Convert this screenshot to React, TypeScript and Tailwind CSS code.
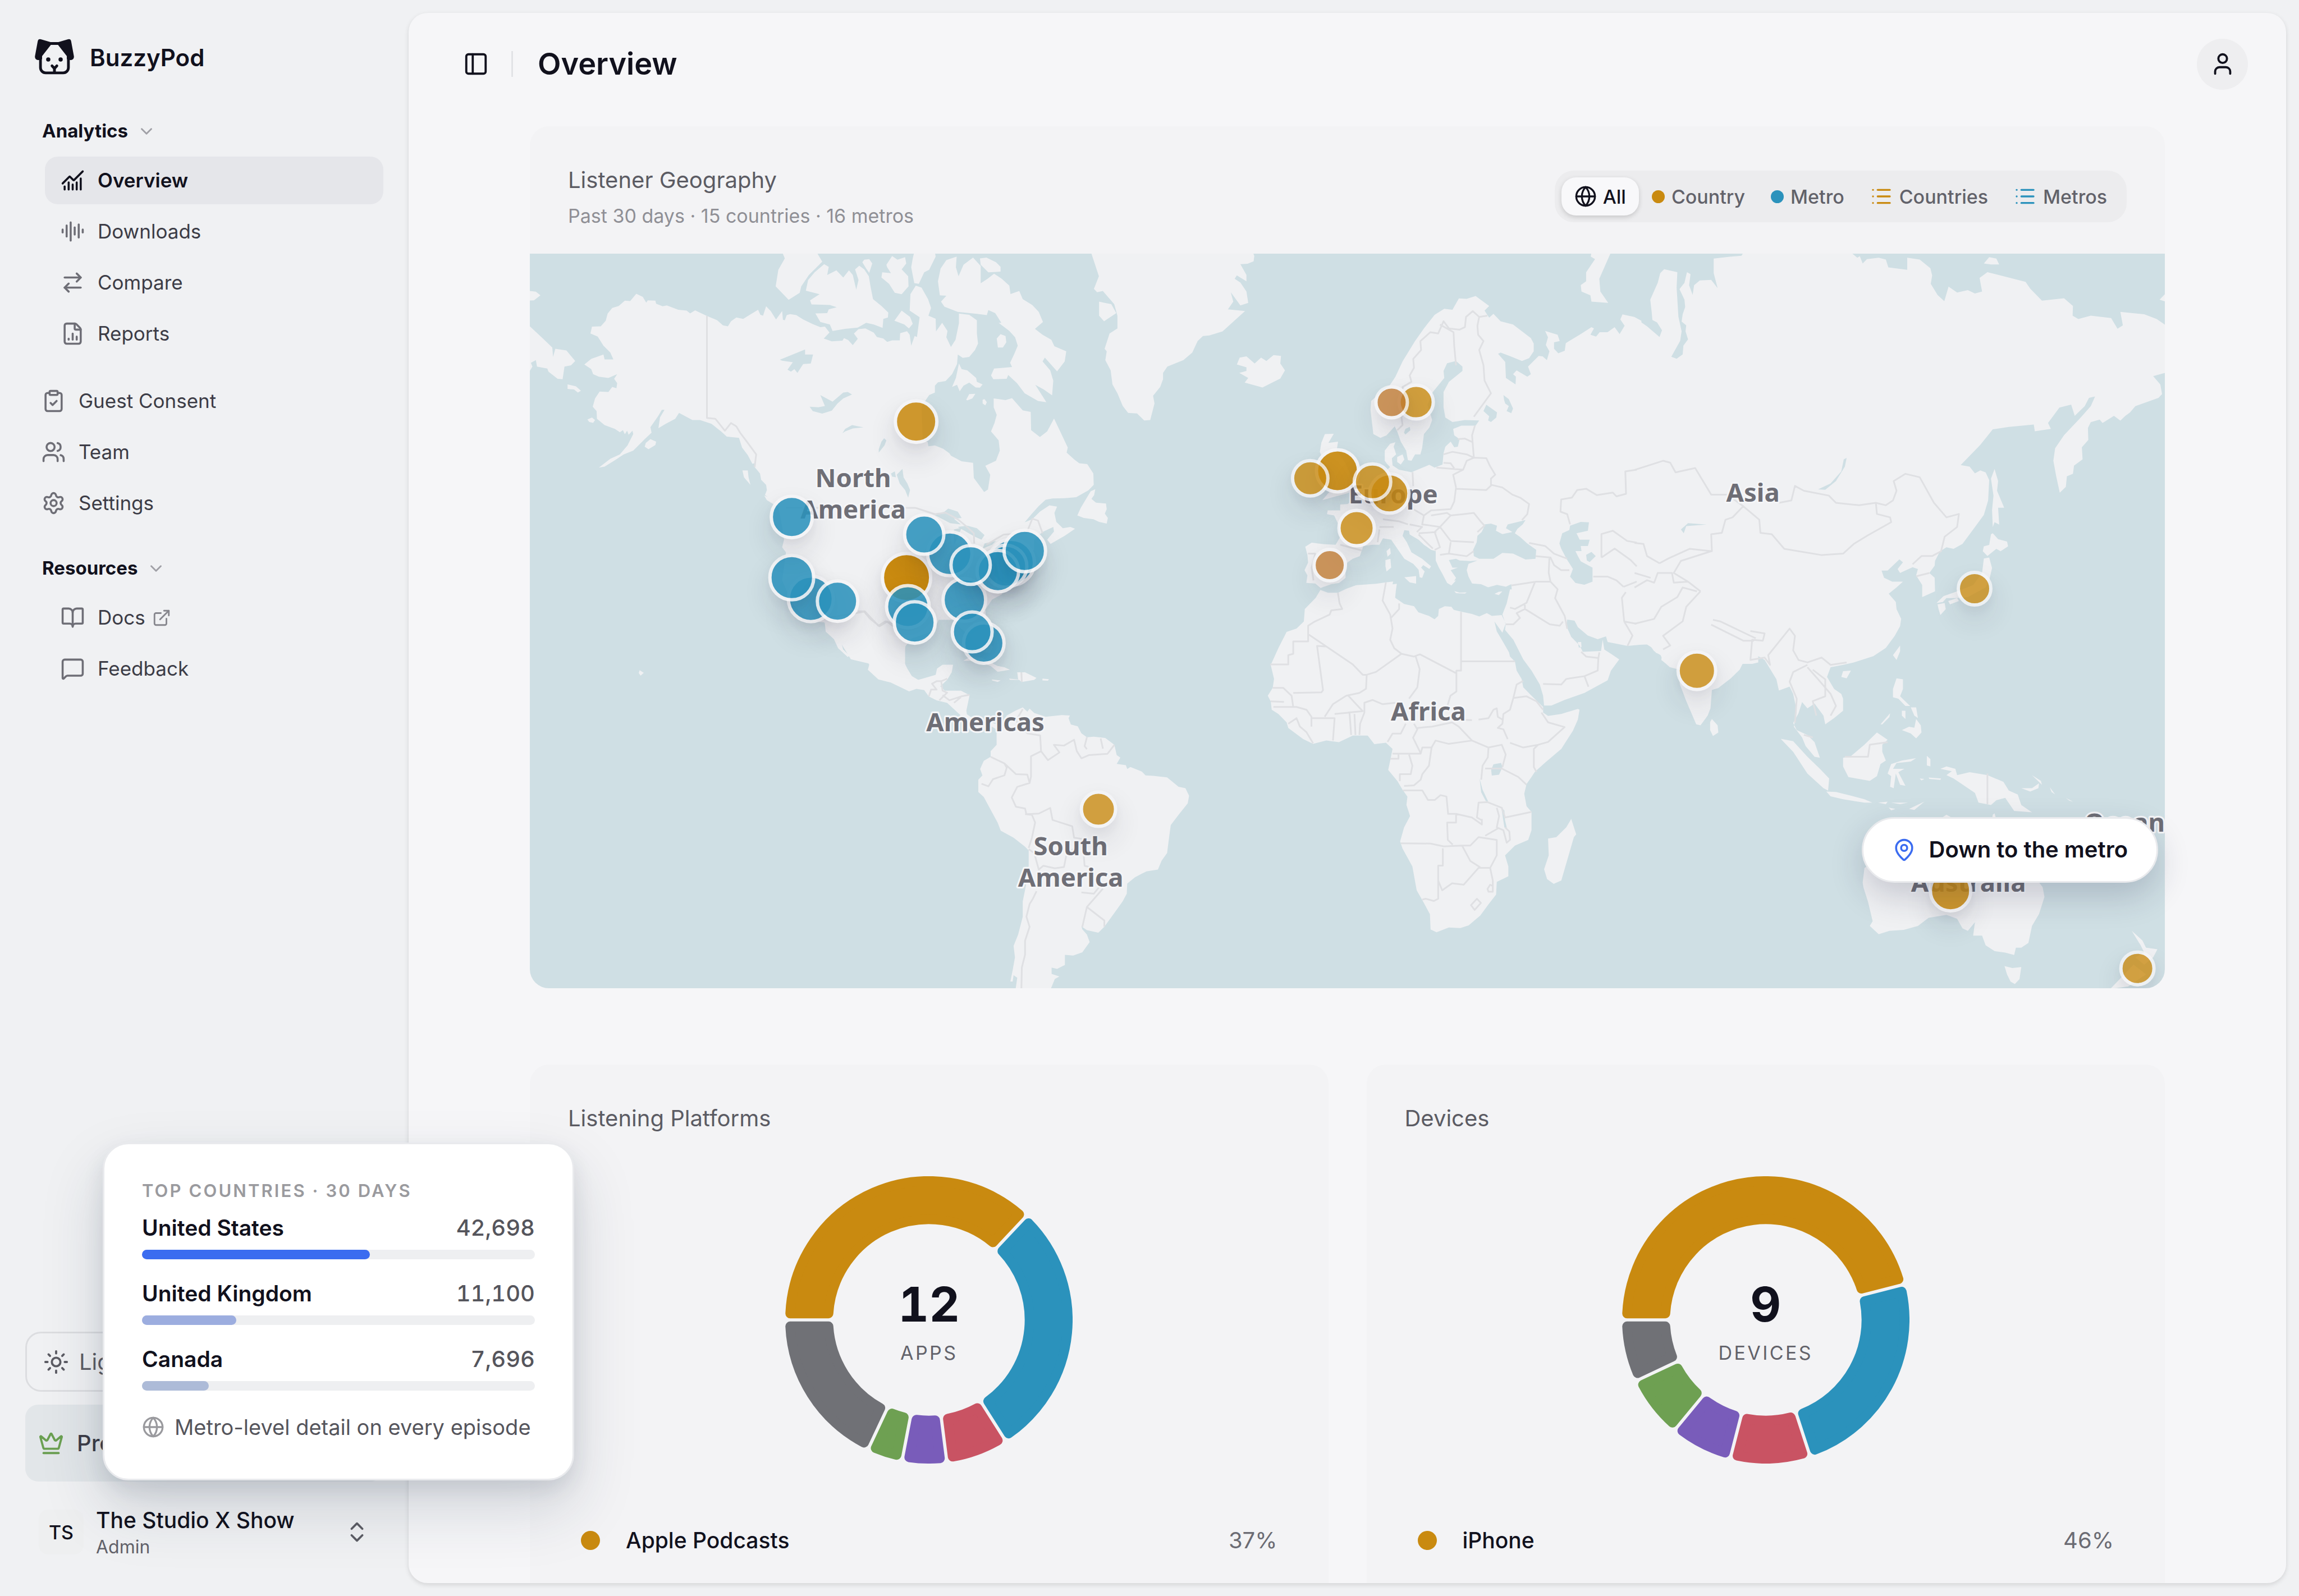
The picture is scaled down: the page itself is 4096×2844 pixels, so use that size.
import type { ReactNode } from "react";
import {
  ArrowRightLeft,
  AudioLines,
  BookOpen,
  ChartNoAxesCombined,
  ChevronDown,
  ChevronsUpDown,
  ClipboardCheck,
  Crown,
  ExternalLink,
  FileChartColumn,
  Globe,
  List,
  MapPin,
  MessageSquare,
  PanelLeft,
  Settings,
  Sun,
  User,
  Users,
  type LucideIcon,
} from "lucide-react";

/* ------------------------------------------------------------------ */
/* Sidebar                                                             */
/* ------------------------------------------------------------------ */

function Logo() {
  return (
    <svg viewBox="0 -1 98 90" className="h-16 w-[70px] shrink-0" aria-hidden="true">
      <path
        d="M14 44V71A13 13 0 0 0 27 84.5H71A13 13 0 0 0 84 71V44M34 11H64"
        fill="none"
        stroke="#11111d"
        strokeWidth="6.8"
      />
      <path
        d="M7 6Q8 -1.5 15 .3L39 7.6 40 14.5 18 42.5V50Q14 53 7 52.3 -.5 51 .2 43Z"
        fill="#11111d"
      />
      <path
        d="M91 6Q90 -1.5 83 .3L59 7.6 58 14.5 80 42.5V50Q84 53 91 52.3 98.5 51 97.8 43Z"
        fill="#11111d"
      />
      <circle cx="33.5" cy="51" r="5.3" fill="#11111d" />
      <circle cx="64.5" cy="51" r="5.3" fill="#11111d" />
      <path
        d="M43 67 49 73.500 55 67M49 73.500V84"
        fill="none"
        stroke="#11111d"
        strokeWidth="7"
        strokeLinecap="round"
        strokeLinejoin="round"
      />
    </svg>
  );
}

function NavHeading({ children }: { children: ReactNode }) {
  return (
    <button
      type="button"
      className="flex h-11 items-center gap-4 pl-[75px] text-left text-[33px] font-bold text-[#11111d]"
    >
      {children}
      <ChevronDown className="size-[34px] text-[#a0a0a6]" />
    </button>
  );
}

function NavItem({
  icon: Icon,
  label,
  active = false,
  nested = false,
  external = false,
}: {
  icon: LucideIcon;
  label: string;
  active?: boolean;
  nested?: boolean;
  external?: boolean;
}) {
  return (
    <li className={nested ? "pl-20" : "pl-[46px]"}>
      <a
        href="#"
        className={
          active
            ? "flex h-[85px] items-center gap-[23px] rounded-[23px] bg-[#e5e6ea] px-7 text-[35px] font-semibold text-[#11111d]"
            : "flex h-[85px] items-center gap-[23px] rounded-[23px] px-7 text-[35px] text-[#3c3c46]"
        }
      >
        <Icon className={active ? "size-[43px]" : "size-[43px] text-[#6e6e76]"} />
        <span className="flex items-center gap-3">
          {label}
          {external && <ExternalLink className="size-[34px] text-[#86868d]" />}
        </span>
      </a>
    </li>
  );
}

function Sidebar() {
  return (
    <aside className="flex w-[728px] shrink-0 flex-col pr-[45px]">
      <div className="flex h-[212px] items-start gap-7 pl-[62px] pt-[69px]">
        <Logo />
        <span className="text-[42px] leading-[68px] font-semibold text-[#11111d]">BuzzyPod</span>
      </div>
      <nav aria-label="Main">
        <NavHeading>Analytics</NavHeading>
        <ul className="mt-[23px] flex flex-col gap-1.5">
          <NavItem nested active icon={ChartNoAxesCombined} label="Overview" />
          <NavItem nested icon={AudioLines} label="Downloads" />
          <NavItem nested icon={ArrowRightLeft} label="Compare" />
          <NavItem nested icon={FileChartColumn} label="Reports" />
        </ul>
        <ul className="mt-[35px] flex flex-col gap-1.5">
          <NavItem icon={ClipboardCheck} label="Guest Consent" />
          <NavItem icon={Users} label="Team" />
          <NavItem icon={Settings} label="Settings" />
        </ul>
        <div className="mt-[52px]">
          <NavHeading>Resources</NavHeading>
        </div>
        <ul className="mt-[23px] flex flex-col gap-1.5">
          <NavItem nested external icon={BookOpen} label="Docs" />
          <NavItem nested icon={MessageSquare} label="Feedback" />
        </ul>
      </nav>
      <div className="mt-auto flex flex-col gap-[23px] pb-[62px] pl-[45px]">
        <button
          type="button"
          className="flex h-[107px] items-center gap-[18px] rounded-[28px] border-3 border-[#dcdde0] px-[29px] text-[40px] text-[#5c5c64]"
        >
          <Sun className="size-[46px]" />
          Light
        </button>
        <button
          type="button"
          className="flex h-[137px] items-center gap-[23px] rounded-[23px] bg-[#e2e6e9] px-[23px] text-[40px] font-medium text-[#3c3c46]"
        >
          <Crown className="size-[46px] text-[#6ba052]" />
          Pro
        </button>
        <button type="button" className="mt-[7px] flex h-28 items-center px-6 pt-2 text-left">
          <span className="flex size-20 shrink-0 items-center justify-center rounded-[17px] bg-[#eeeff0] text-[34px] font-medium text-[#11111d]">
            TS
          </span>
          <span className="flex flex-1 flex-col pl-[22px]">
            <span className="text-[39px] leading-[54px] font-medium text-[#11111d]">
              The Studio X Show
            </span>
            <span className="text-[32px] leading-[42px] text-[#62626a]">Admin</span>
          </span>
          <ChevronsUpDown className="size-[46px] text-[#5c5c64]" />
        </button>
      </div>
    </aside>
  );
}

/* ------------------------------------------------------------------ */
/* Map                                                                 */
/* ------------------------------------------------------------------ */

type Tile = { transform: string; land: string; water?: string; borders: string };

const TILES: Tile[] = [
  {
    // North America
    transform: "translate(1300 600) scale(.9566 .6378)",
    land:
      "M188 370 192 343 215 342 228 320 233 292 245 270 262 262 278 241 292 243 308 214 325 226 334 249 338 240 358 241 360 253 377 263 388 260 418 277 440 280 449 291 462 279 493 301 520 318 535 338 548 342 556 322 570 307 588 313 607 295 627 277 633 297 640 300 648 263 660 282 674 315 690 282 692 316 697 318 702 298 711 294 727 298 745 315 770 333 790 345 802 343 814 366 799 390 820 401 848 398 852 388 863 396 875 416 888 391 878 370 890 353 908 350 930 367 938 384 955 390 965 403 978 397 998 397 999 369 1017 361 1024 375 1028 418 1037 380 1043 384 1050 306 1024 280 1026 215 1040 182 1055 190 1072 235 1080 270 1073 300 1092 312 1093 362 1109 328 1123 360 1120 385 1132 423 1144 395 1153 330 1153 292 1180 297 1200 318 1200 370 1203 410 1195 435 1180 462 1163 466 1150 453 1148 490 1135 530 1118 557 1098 562 1090 575 1090 602 1075 612 1066 632 1055 660 1058 790 1071 796 1073 813 1090 810 1112 823 1128 841 1132 850 1160 872 1190 878 1192 938 1207 968 1219 993 1229 983 1235 925 1222 890 1250 870 1260 830 1257 790 1237 755 1246 722 1252 690 1244 660 1244 625 1275 632 1292 624 1320 672 1341 678 1342 750 1365 777 1384 755 1402 704 1415 745 1438 818 1435 838 1455 865 1468 880 1489 883 1505 920 1506 965 1492 986 1460 1013 1430 1017 1398 1018 1380 1023 1362 1048 1343 1080 1325 1112 1345 1100 1365 1070 1390 1045 1410 1050 1403 1075 1408 1110 1425 1135 1445 1130 1457 1137 1430 1165 1393 1197 1384 1180 1402 1148 1400 1130 1372 1150 1360 1165 1350 1180 1350 1220 1310 1270 1280 1330 1265 1395 1240 1415 1222 1455 1225 1500 1240 1560 1225 1575 1205 1530 1180 1500 1150 1495 1100 1495 1085 1540 1030 1568 1012 1600 1012 1700 870 1650 836 1568 800 1505 760 1500 716 1430 690 1340 700 1230 690 1210 695 1180 690 1130 680 1050 660 1020 645 1005 650 985 648 965 635 945 632 920 618 895 618 880 612 882 600 848 585 818 577 780 545 775 530 755 505 725 475 710 455 710 420 682 410 705 385 725 366 742 370 700 382 670 375 670 365 695 345 738 348 760 330 785 300 830 275 845 250 870 225 893 210 897 240 862 265 845 285 810 300 765 298 752 288 768 284 752 278 766 273 750 265 758 252 745 225 730 205 705 204 675 194 658 200 625 212 598 235 600 245 580 256 585 258 565 250 548 258 530 235 545 210 540 195 530 190 510 172 492 190 470 222 453 225 472 248 472 240 445 222 418 207 382Z" +
      "M643 1007 665 1018 690 1040 672 1045 650 1025ZM586 908 600 908 602 935 607 965 590 935ZM333 800 345 785 360 795 358 808 340 825 330 815ZM180 708 192 700 200 710 195 721 185 718ZM128 570 150 578 163 595 155 602 145 590 128 588Z" +
      "M20 330 28 340 60 385 88 425 90 462 96 430 125 437 148 478 137 495 120 500 115 550 102 548 78 520 75 508 48 500 45 475 32 485 36 500 28 520 20 520ZM20 203 28 203 45 206 57 220 40 240 20 241Z" +
      "M690 50 780 50 795 88 760 140 740 185 736 210 707 238 673 185 680 120 697 75Z" +
      "M800 98 812 108 808 140 832 122 850 150 865 122 875 140 884 198 890 160 881 118 892 104 905 118 917 145 922 190 928 235 950 262 968 288 967 307 955 313 953 348 930 335 910 328 888 347 855 352 822 360 815 335 790 325 777 291 808 290 812 275 833 267 815 258 795 257 767 256 763 240 788 216 752 202 758 160 775 130Z" +
      "M900 90 905 80 918 78 926 95 918 132 910 115ZM963 100 978 66 992 80 1012 70 1015 95 1003 118 1020 145 1021 185 1003 216 985 210 970 175 950 150 952 130 975 133 965 110ZM1036 50 1090 50 1092 68 1075 120 1062 130 1048 175 1036 172 1028 110 1032 75ZM1003 280 1025 305 1032 332 1022 350 1010 335 984 320Z" +
      "M1147 68 1145 110 1152 145 1165 100 1190 72 1210 105 1210 173 1228 155 1245 135 1265 155 1285 182 1288 215 1311 203 1320 235 1345 258 1362 285 1373 325 1352 352 1372 375 1395 395 1403 420 1434 440 1430 480 1410 519 1378 465 1372 480 1392 515 1400 555 1397 613 1375 590 1353 572 1382 640 1360 635 1325 605 1305 565 1282 533 1278 548 1243 550 1237 535 1245 508 1292 502 1287 485 1298 450 1307 418 1300 385 1285 360 1257 328 1264 328 1248 290 1230 278 1226 298 1200 293 1150 285 1115 265 1106 245 1120 222 1103 220 1098 165 1105 115 1120 82Z" +
      "M1208 75 1225 72 1250 90 1262 108 1262 127 1230 130 1210 100ZM1252 390 1262 373 1275 380 1277 405 1268 425 1255 425ZM1153 488 1160 510 1175 515 1198 545 1200 560 1215 570 1208 583 1197 582 1180 563 1165 575 1155 597 1148 572 1135 580 1145 545ZM1172 630 1180 608 1196 607 1188 625 1175 633ZM1215 630 1220 628 1226 640 1222 652 1215 645Z" +
      "M1510 982 1507 1005 1500 1020 1512 1035 1538 1038 1540 1060 1535 1078 1543 1095 1540 1117 1520 1110 1505 1100 1480 1095 1463 1085 1472 1055 1490 1010 1498 990ZM1520 245 1535 250 1552 255 1565 290 1550 305 1533 322 1520 300Z",
    water:
      "M684 473 750 433 750 453 771 453 765 488 745 490 730 525 722 510 713 520 704 512 718 483 690 477ZM762 658 785 660 802 655 790 612 822 638 850 602 862 600 873 610 850 625 835 645 820 673 795 685 770 675ZM848 762 855 745 873 730 903 739 875 743 855 755ZM957 782 963 790 958 810 943 838 943 825 950 795ZM1005 902 1008 935 1018 960 1025 985 1020 1015 1012 985 998 960 990 925ZM975 920 985 912 988 935 978 932Z" +
      "M1090 1085 1115 1070 1125 1058 1150 1070 1160 1095 1140 1098 1158 1120 1130 1115 1098 1090ZM1140 1140 1160 1133 1150 1170 1140 1200ZM1150 1130 1175 1125 1200 1135 1220 1162 1212 1180 1190 1165ZM1220 1195 1250 1185 1240 1200 1215 1215Z",
    borders:
      "M493 301V702L515 705 540 752 556 722 570 735 580 760 600 800 622 845 618 895M700 1055H1038L1045 1058 1090 1080 1118 1074 1150 1100 1178 1135 1192 1155 1193 1195M1225 1200 1270 1160 1330 1155 1345 1098 1360 1105 1372 1155M800 1490 905 1463 920 1490 945 1520 965 1502 985 1525",
  },
  {
    // Central and South America
    transform: "translate(1300 1500) scale(1.148 .6378)",
    land:
      "M690 -40 690 60 700 110 710 150 725 155 730 185 755 225 765 260 762 280 785 318 812 330 852 365 868 355 885 360 895 385 912 400 935 410 950 435 962 455 975 480 1000 500 1025 495 1043 515 1050 500 1030 485 1000 482 978 455 977 440 984 380 965 362 930 362 920 345 935 320 945 290 948 260 925 260 913 275 910 300 872 320 858 305 848 275 838 238 845 180 860 150 870 -40Z" +
      "M960 60 985 60 1010 130 1035 190 1028 215 1010 210 985 150 955 100ZM668 95 680 100 690 140 703 165 708 200 722 225 718 230 697 195 688 160 670 130ZM264 282 273 292 266 303 262 293Z" +
      "M970 245 985 230 1010 232 1045 265 1060 270 1072 280 1045 288 1030 265 1000 245ZM1033 318 1052 322 1045 328 1033 322ZM1070 315 1090 318 1088 290 1105 290 1130 312 1125 320 1098 328 1092 320 1072 320ZM1143 315 1157 317 1155 323 1143 322Z" +
      "M1043 520 1043 575 1030 600 1030 622 1015 638 1007 670 1012 695 1003 712 1003 760 1015 780 1030 830 1045 880 1052 912 1080 940 1105 975 1113 990 1113 1050 1110 1100 1100 1190 1100 1250 1090 1320 1080 1365 1083 1410 1078 1460 1073 1505 1078 1505 1080 1480 1088 1490 1084 1540 1080 1568 1160 1568 1162 1530 1170 1495 1180 1485 1163 1475 1163 1450 1175 1455 1192 1440 1192 1400 1210 1403 1230 1390 1246 1350 1240 1320 1230 1300 1228 1288 1240 1303 1265 1313 1278 1290 1300 1235 1318 1190 1327 1160 1328 1120 1345 1095 1370 1072 1395 1065 1403 1030 1415 1000 1420 930 1423 890 1440 850 1460 805 1463 775 1455 745 1440 740 1415 703 1385 697 1368 695 1360 680 1335 662 1328 670 1325 655 1305 650 1313 625 1305 615 1300 575 1280 548 1255 543 1240 545 1228 530 1220 502 1205 495 1200 470 1203 460 1185 458 1150 465 1125 450 1115 433 1110 445 1100 428 1085 440 1065 460 1055 490Z",
    borders:
      "M740 50 755 50 785 107 800 90 822 100M1113 985 1125 1000 1135 1065 1145 1050 1170 1060 1190 1055 1195 1010 1212 980M1130 1150 1122 1180 1115 1200 1108 1250 1115 1290 1105 1345 1105 1400 1098 1450 1097 1540M1030 622 1060 648 1065 665 1060 695 1035 710 1025 738 1010 728M1060 648 1085 690 1110 692 1115 725 1088 740 1076 782 1085 818 1105 825 1108 848 1120 850 1127 880 1120 940 1113 980M1100 435 1085 480 1110 530 1138 538 1140 600 1118 620 1118 700 1115 725M1140 600 1155 635 1180 605 1168 575 1190 578 1212 555 1218 600 1228 628 1245 615 1285 610 1300 575M1240 545 1235 580 1240 592M1270 550 1275 590M1105 848 1135 845 1160 823 1165 870 1208 895 1212 940 1230 945 1235 1050 1255 1060M1228 1155 1255 1160 1275 1115 1260 1120M1275 1140 1240 1212 1230 1290M1240 1212 1278 1265 1278 1290M895 385 900 358 912 358 902 335 912 325 922 325 935 315M922 325 925 362 935 370 918 400M925 380 940 400 965 385 984 378M950 410 965 388M1097 290 1098 328",
  },
  {
    // Greenland, Europe, western Russia
    transform: "translate(2800 600) scale(.8929 .6378)",
    land:
      "M-75 50 -73 56 -52 145 -66 195 -57 208 -41 203 -9 255 0 300 0 350 -22 370 -36 430 -30 440 -34 475 -19 515 -14 570 0 605 15 655 30 682 55 684 75 712 92 710 104 645 100 615 120 580 128 550 128 525 140 500 172 482 185 475 210 445 225 400 240 380 258 378 295 362 358 282 310 275 325 245 318 208 345 260 367 250 362 205 345 170 329 155 335 142 362 165 362 140 345 98 365 96 382 87 384 66 380 50Z" +
      "M335 492 343 465 362 460 385 488 403 465 418 478 438 455 459 458 457 488 470 515 457 547 407 582 357 563 367 545 342 525 362 517 362 503Z" +
      "M738 780 718 765 710 670 712 635 740 600 765 572 780 540 800 480 835 400 860 350 890 297 917 273 940 277 958 232 980 234 1005 223 1043 262 1030 280 1043 308 1055 293 1075 322 1110 335 1160 388 1168 410 1168 440 1155 467 1135 478 1100 458 1075 445 1068 450 1088 482 1090 545 1117 570 1118 540 1110 530 1120 515 1150 540 1160 530 1152 500 1182 458 1193 460 1205 475 1212 440 1202 415 1208 385 1200 360 1235 375 1241 400 1225 405 1225 430 1237 448 1255 438 1258 408 1300 372 1330 345 1337 350 1327 375 1343 382 1353 365 1375 365 1395 345 1409 372 1423 340 1411 315 1417 295 1450 305 1470 320 1470 1400 1108 1400 1105 1355 1090 1365 1065 1358 1040 1367 1020 1355 995 1352 985 1325 980 1300 985 1275 1010 1262 990 1264 960 1262 950 1255 930 1260 940 1290 955 1290 935 1300 950 1330 945 1342 950 1340 937 1360 925 1350 910 1310 902 1290 893 1262 893 1225 880 1220 860 1200 845 1180 820 1160 818 1145 805 1143 800 1165 812 1190 825 1230 855 1255 880 1285 875 1295 858 1280 852 1290 862 1305 855 1330 848 1328 845 1298 830 1275 805 1255 790 1225 768 1180 745 1175 735 1200 715 1200 690 1205 685 1225 680 1245 660 1255 645 1270 640 1300 640 1330 622 1350 600 1355 570 1370 555 1352 530 1350 533 1320 525 1300 535 1270 533 1240 527 1208 545 1192 580 1198 612 1200 625 1170 620 1120 608 1085 588 1080 590 1065 625 1065 625 1042 645 1040 670 1020 700 980 730 930 750 915 765 895 755 880 750 870 750 830 765 803 780 797 775 815 782 845 770 860 772 888 790 905 825 915 860 895 875 886 890 897 912 885 915 840 920 815 935 795 945 817 955 815 960 785 945 770 942 745 965 732 1005 732 1015 712 975 710 940 718 920 700 915 660 915 600 930 560 968 517 968 500 950 478 925 487 915 517 917 545 885 600 870 650 883 710 875 740 860 765 855 820 850 845 835 845 825 870 815 868 810 830 795 795 785 755 778 735 755 770Z" +
      "M582 765 607 764 592 800 619 795 615 830 640 880 655 930 675 960 670 985 640 1000 600 1015 575 1025 590 1000 600 985 590 960 600 920 580 880 568 835 572 800ZM785 855 800 845 805 865 795 885 785 875Z" +
      "M755 1225 765 1212 767 1235 758 1247ZM752 1260 766 1255 768 1290 755 1305 752 1285ZM805 1328 838 1323 838 1353 820 1348ZM945 1382 960 1388 980 1387 975 1392 950 1390ZM1058 1393 1070 1385 1080 1383 1070 1398Z" +
      "M1330 50 1385 50 1352 155 1355 205 1377 250 1330 245 1327 220 1302 205 1300 180 1315 165 1315 130 1340 78 1328 68Z",
    water:
      "M1035 650 1065 680 1063 700 1048 718 1040 712 1043 695 1027 675ZM1083 612 1098 628 1110 665 1105 683 1092 675 1098 655 1088 645 1085 632ZM808 745 820 737 822 750 808 767 804 760Z" +
      "M1030 1120 1048 1117 1065 1125 1062 1145 1080 1158 1108 1150 1090 1135 1095 1120 1145 1103 1137 1120 1122 1138 1115 1155 1130 1170 1150 1195 1175 1220 1173 1255 1145 1258 1110 1235 1080 1232 1055 1255 1015 1255 1000 1245 998 1220 1008 1190 1010 1165 1022 1150 1027 1135Z" +
      "M1270 1125 1300 1110 1323 1112 1320 1145 1288 1155 1297 1180 1325 1180 1320 1205 1300 1205 1302 1225 1285 1225 1292 1245 1300 1265 1333 1290 1333 1345 1310 1357 1285 1350 1270 1325 1278 1295 1260 1255 1245 1215 1240 1195 1248 1155 1268 1142ZM1315 1240 1330 1228 1342 1245 1325 1268 1317 1262Z",
    borders:
      "M785 750 800 730 797 700 810 640 800 580 825 560 820 535 832 505 830 470 852 435 850 400 878 365 900 370 915 322 930 350 960 355 975 345 978 305 997 282 1015 305 1010 340 1012 375 1027 400 1015 435 1027 495 1030 555 1048 605 1000 697M905 335 943 365 945 420 950 495M1015 305 1038 300M1003 732 995 770 1000 858 1035 860 1045 890 1060 925 1048 940 1048 965M955 785 975 783 998 798M915 845 940 835 980 845 1000 858 980 870 970 905M895 897 970 905 942 925 950 975M915 878 935 880 945 900M950 980 1035 985 1050 965 1080 975 1108 1003 1130 1015 1155 1040 1150 1080 1135 1103M828 915 830 970M950 975 945 1030 935 1060 880 1065 860 1085 830 1060M860 1085 855 1120 905 1130 935 1085 925 1075 880 1085M935 1085 970 1080 1000 1075 1020 1110 1030 1125 1010 1150M905 1130 935 1185 1000 1190M905 1130 890 1150 905 1210 890 1220M845 1155 895 1150M820 1120 855 1130 840 1150M845 1160 870 1195 885 1215M935 1190 930 1235 980 1245 1000 1225M905 1240 930 1235M745 1100 790 1108 815 1120M735 1130 775 1130M730 1190 735 1140M625 1200 685 1222M535 1235 555 1235 545 1290 550 1340" +
      "M1270 1120 1262 1080 1243 1070 1245 1022 1275 1015 1290 985 1315 980 1345 1005 1390 995 1400 1010 1427 1000 1425 912 1457 905M1155 1193 1200 1205 1225 1235 1262 1255M1173 1245 1215 1250 1225 1280 1245 1300 1268 1300M1212 1250 1210 1310 1215 1345 1175 1345 1105 1360M1215 1345 1235 1375 1228 1410 1255 1480 1262 1530M1358 1250V1158L1390 1145 1430 1185 1457 1192M1335 1325 1375 1325 1400 1340 1420 1365M1358 1250 1395 1215 1440 1260 1457 1285M1420 1365 1457 1345",
  },
  {
    // Africa, Arabia, Iran
    transform: "translate(3000 1400) scale(.8291 .7015)",
    land:
      "M372 112 395 122 425 122 450 108 480 95 540 90 570 85 592 82 590 92 603 90 600 115 598 140 625 162 655 170 668 192 700 205 717 217 728 205 730 180 748 170 768 172 775 183 800 190 830 198 852 207 875 195 890 205 920 202 932 232 922 265 910 245 898 225 905 260 925 300 942 335 945 350 960 368 965 400 980 430 985 460 1010 490 1045 530 1045 550 1060 562 1100 555 1150 537 1155 540 1150 575 1135 615 1100 680 1050 730 1020 762 1010 780 995 805 988 840 995 885 1010 905 1010 970 1000 1005 960 1025 930 1060 940 1100 940 1135 905 1155 903 1200 880 1235 855 1275 820 1310 795 1320 760 1318 723 1335 705 1325 703 1270 680 1220 663 1185 650 1100 620 1035 613 1010 625 960 643 920 632 880 635 850 620 825 605 795 577 755 585 710 590 680 570 658 535 663 515 632 470 632 428 656 390 650 350 662 320 645 275 605 270 585 245 555 225 540 222 510 213 490 228 462 232 430 222 380 245 320 270 262 300 250 322 225 325 180 358 140Z" +
      "M1130 930 1145 985 1138 995 1100 1150 1077 1162 1057 1145 1048 1110 1062 1060 1060 1000 1085 995 1115 960Z" +
      "M945 110 935 160 922 200 932 235 930 255 955 290 985 360 1010 400 1035 450 1045 490 1048 525 1070 525 1110 505 1170 480 1240 435 1250 400 1275 360 1250 340 1230 325 1225 290 1220 330 1165 333 1155 310 1130 280 1115 240 1118 218 1140 222 1150 245 1180 275 1210 288 1235 278 1240 298 1300 312 1365 305 1380 330 1400 345 1408 365 1428 388 1460 375 1460 110ZM1150 298 1160 298 1161 316 1153 318Z",
    water: "M895 735 918 730 922 745 912 772 890 775 888 755ZM853 785 862 825 879 868 872 866 858 835ZM919 890 928 900 930 935 936 965 928 960 924 930Z",
    borders:
      "M425 122 430 160 438 180 405 185 400 200 355 225 335 240 335 296 290 296 290 340 275 345 275 378 220 378M335 270 470 378 500 415 512 415 510 465 490 480 450 490 410 520 385 565M388 314 362 312 380 470 375 478 290 480M512 415 540 405 617 340 595 320 583 290 590 250 583 200 560 150 570 85M583 215 610 180 610 160M617 340 655 350 673 342 783 410 783 400 797 400 797 190M797 367H960M783 410V475L765 490 755 530M660 350 672 395 665 460 640 500M228 462 260 462 285 490 290 530M222 510 262 512M230 530 300 530 330 540 345 565 345 600M275 590 300 570 310 600 330 620 350 660M345 570 415 570 410 650M415 555 460 550 465 630M455 488 480 520 500 545 455 550M475 555 478 630M490 630 492 590 505 550 505 515 530 505 560 520 600 515M575 655 590 625 615 625 630 590M655 590 665 610 652 640 675 695M590 697 675 697 680 675 708 675 720 650 760 662 800 655 830 650 790 600 770 585 710 600 665 605M583 715 608 715 608 697M640 700 650 740 645 770 612 770 612 795M708 675 700 740 680 770 675 790 655 810 625 812M622 828H680L697 862 718 862 735 845 753 850 758 912 782 912 830 925 860 950 860 930M782 912V943H755L757 1005 772 1022M615 1017 705 1018 745 1028 800 1025 825 1080 855 1103M742 1035V1097H728V1215L715 1223 690 1215 680 1218M728 1150 740 1185 770 1160 805 1165 850 1105 885 1105 893 1150 893 1190M800 1025 825 1025 850 995 905 1005 905 1060 885 1105M870 990 910 963M827 1238 845 1215 857 1230 838 1255ZM877 1180 885 1165 893 1170 893 1190 880 1190ZM877 870 920 890 930 925 1010 905M877 870 850 872 845 925 860 935M905 890 912 920 905 960 925 970 935 1015 945 1005 943 975 930 960M830 650 860 665 880 675 920 665 932 700 922 745M880 675 878 710 862 740 858 790M870 750H920L970 780 995 808M945 658 985 675 1030 665 1060 655 1110 602 1060 585 1040 550M1030 665 1017 680 1017 745 1025 762M955 498 995 492 1025 510 1045 540M985 437 965 450 955 498 945 540 925 555 922 590 908 605 925 610 938 645M790 575 830 577M850 575 880 570 895 540 905 535 908 565 922 575" +
      "M945 175 960 180 995 158 1020 85M990 165 990 180 965 195 975 212 955 235 932 235M990 180 1065 235 1095 240 1105 225M1160 333 1175 350 1212 355 1215 335M1212 355 1210 400 1170 420 1182 458M1170 420 1115 430 1100 450 1045 448M1290 225 1315 275 1300 312M1290 225 1283 140 1295 120M1290 225 1327 233",
  },
  {
    // Asia and Oceania
    transform: "translate(4100 600) scale(.8929 1.2117)",
    land:
      "M-5 162 30 180 65 202 72 188 58 172 45 167 43 150 39 125 60 90 67 70 78 62 115 68 113 100 118 160 127 190 123 210 98 243 113 247 130 238 132 220 145 207 138 190 140 178 127 170 130 155 137 140 135 125 121 103 135 90 142 68 152 72 148 95 158 115 162 95 178 85 210 84 228 101 217 70 217 40 262 36 295 34 300 28 603 28 620 38 627 35 635 50 647 41 680 38 700 42 707 58 760 63 760 38 795 42 825 60 830 75 826 92 845 115 864 128 876 98 900 110 930 105 950 112 970 108 963 80 985 68 1092 88 1105 102 1138 127 1200 122 1225 138 1224 158 1240 165 1275 158 1332 163 1350 185 1365 178 1358 150 1425 155 1460 165 1490 180 1490 275 1450 283 1470 300 1475 320 1465 328 1400 345 1385 358 1372 365 1358 375 1340 365 1325 372 1308 380 1300 373 1275 378 1267 390 1268 415 1250 430 1252 455 1228 468 1225 485 1208 490 1205 512 1188 524 1178 490 1170 458 1175 432 1200 405 1245 370 1275 345 1287 325 1270 328 1258 345 1230 365 1220 342 1187 348 1155 380 1163 392 1118 397 1115 383 1045 388 1000 393 965 425 910 467 935 470 950 484 965 478 980 482 990 498 987 540 975 570 945 600 915 630 890 640 870 637 852 645 845 655 838 665 837 675 822 690 837 700 838 728 802 740 802 715 785 695 790 682 775 678 740 690 733 682 748 668 738 662 705 685 688 685 695 700 718 708 748 708 730 720 708 733 728 750 730 765 743 785 740 800 725 820 700 845 665 862 610 875 580 880 545 885 535 905 555 930 575 940 580 950 580 975 555 990 530 1003 525 985 500 960 480 970 465 957 455 980 440 1000 450 1015 480 1025 500 1040 515 1072 500 1070 475 1048 465 1030 442 1008 450 975 440 940 430 925 400 933 393 910 360 870 342 862 342 875 325 878 298 878 290 890 265 908 230 928 212 932 208 970 200 985 180 1005 168 1003 140 955 122 920 120 890 95 885 70 870 72 860 55 855 45 845 30 838 -5 838Z" +
      "M975 50 990 37 1010 40 1018 52 995 52ZM1468 125 1490 108 1490 130ZM1005 475 1015 500 1012 520 1032 555 1015 555 1018 590 1005 585 1000 595 998 560 1002 530 995 495ZM1000 608 1015 620 1040 625 1043 635 1022 645 1010 640 985 655 972 645 975 635 990 632 995 610ZM975 660 990 658 998 680 990 705 980 720 930 740 895 742 870 742 860 750 842 752 862 738 900 728 945 715 970 690ZM845 755 865 752 868 765 853 777 848 765ZM875 748 900 742 905 748 880 755ZM740 840 740 852 730 870 720 860ZM575 905 580 893 602 892 590 908ZM212 992 228 1005 230 1020 215 1027 207 1015 207 998Z" +
      "M730 908 748 910 748 930 740 945 768 965 755 965 735 950 720 947 720 930ZM770 968 785 968 790 990 780 985ZM745 975 755 975 755 992 745 985ZM745 1015 765 1008 780 1010 785 992 798 1005 800 1020 785 1032 770 1022ZM685 1003 712 980 710 988 690 1003ZM580 1072 600 1070 640 1045 675 1020 705 1035 690 1045 690 1060 700 1078 685 1085 675 1110 655 1120 595 1112 580 1090ZM405 1033 440 1038 480 1070 515 1095 541 1115 538 1140 525 1135 480 1105 440 1060ZM533 1142 560 1143 600 1150 640 1158 662 1165 640 1165 580 1158 545 1152ZM678 1165 705 1163 700 1168ZM715 1165 762 1165 740 1168ZM765 1178 808 1163 780 1180ZM708 1175 727 1178 715 1181Z" +
      "M715 1085 745 1078 785 1073 770 1080 730 1083 720 1095 752 1095 735 1102 755 1130 740 1128 728 1105 722 1135 712 1132 715 1110 705 1105ZM815 1068 825 1075 825 1090 815 1088ZM820 1113 855 1115 853 1118 822 1116ZM795 1115 808 1116 800 1119ZM853 1095 870 1090 895 1095 900 1108 935 1102 985 1108 1030 1122 1045 1140 1070 1148 1080 1170 1110 1185 1060 1182 1035 1155 1010 1160 995 1170 960 1165 950 1145 910 1125 890 1115 870 1108 885 1100ZM1080 1135 1110 1135 1130 1125 1128 1135 1105 1142ZM1110 1108 1135 1120 1138 1128ZM1160 1133 1175 1148 1165 1143ZM1205 1155 1225 1163 1215 1161Z" +
      "M635 1330 640 1300 700 1270 760 1240 830 1210 870 1190 890 1198 960 1230 990 1240 1000 1190 1005 1187 1010 1200 1030 1240 1080 1280 1120 1320 1140 1340 1145 1360 1130 1395 1110 1420 1100 1455 1080 1465 1065 1465 1060 1480 1035 1475 1005 1472 980 1460 970 1440 945 1440 950 1412 930 1430 915 1425 900 1405 870 1397 820 1403 790 1420 750 1428 710 1430 680 1437 655 1420 663 1410 650 1370 637 1340ZM1033 1503 1055 1507 1080 1505 1075 1530 1062 1540 1050 1535 1040 1520ZM1390 1430 1420 1450 1430 1465 1462 1468 1450 1485 1425 1500 1400 1485 1425 1475 1415 1460ZM1395 1500 1430 1520 1380 1545 1330 1550Z",
    water: "M590 452 585 470 560 500 530 518 510 517 545 505 575 480 582 455ZM125 600 145 587 197 590 160 592 140 593 133 608Z",
    borders:
      "M-5 477 75 458 95 462 110 482 165 473 210 528 255 528 300 552 270 575 250 580 240 607 210 610 212 645 150 640 90 660 65 670M300 552 345 580 348 607 380 610 415 640 520 653 580 650 610 630 650 612 715 585 712 575 675 568 672 545 625 550 560 545 540 530 470 520 445 510 435 540 400 545M672 545 700 550 720 540 730 520 722 500 755 485 795 492 835 545 870 575 905 568 900 595 865 615 855 645 830 655 800 655 775 672M785 697 822 690M210 645 125 665 105 690 145 708 180 728M215 787 235 790 320 820 335 825M210 797 300 830 330 830M320 810 360 815 355 830 325 828 320 870 360 865 375 880 370 860 430 805 445 820 440 850 455 870 480 875 520 865 545 880 590 875M480 880 440 895 430 915 450 950 445 1000M480 885 510 910 545 940 560 965 545 985M495 890 530 910 530 945 495 955 505 985M-5 795 50 785 70 760 115 740 130 720 170 728M75 848 95 840 75 820 130 790 140 760 165 740 180 728M-5 720 30 705 50 710 60 690 100 690 105 710 145 708M-5 690 40 700M-5 628 20 630 30 655 65 670M585 1070 650 1070 655 1045 705 1040M985 1105V1168M470 1025 495 1030",
  },
];

const LABELS: { x: number; y: number; lines: string[] }[] = [
  { x: 2138, y: 1221, lines: ["North", "America"] },
  { x: 2469, y: 1832, lines: ["Americas"] },
  { x: 2683, y: 2143, lines: ["South", "America"] },
  { x: 3491, y: 1262, lines: ["Europe"] },
  { x: 3579, y: 1806, lines: ["Africa"] },
  { x: 4392, y: 1258, lines: ["Asia"] },
  { x: 4932, y: 2235, lines: ["Australia"] },
  { x: 5352, y: 2085, lines: ["Oceania"] },
];

type Tone = "metro" | "country" | "muted";

const TONES: Record<Tone, string> = {
  metro:
    "absolute aspect-square -translate-1/2 rounded-full border-6 border-[#f5f5f7] bg-[#2b92bc] shadow-[0_24px_48px_rgba(30,35,60,0.12),0_8px_16px_rgba(30,35,60,0.06)]",
  country:
    "absolute aspect-square -translate-1/2 rounded-full border-6 border-[#f5f5f7] bg-[#c98a10] shadow-[0_24px_48px_rgba(30,35,60,0.12),0_8px_16px_rgba(30,35,60,0.06)]",
  muted:
    "absolute aspect-square -translate-1/2 rounded-full border-6 border-[#f5f5f7] bg-[#bf7930] shadow-[0_24px_48px_rgba(30,35,60,0.12),0_8px_16px_rgba(30,35,60,0.06)]",
};

type Pin = { name: string; tone: Tone; x: number; y: number; d: number; o: number };

const PINS: Pin[] = [
  { name: "United States", tone: "country", x: 2272, y: 1448, d: 129, o: 1 },
  { name: "New York", tone: "metro", x: 2534, y: 1409, d: 124, o: 0.87 },
  { name: "Los Angeles", tone: "metro", x: 2032, y: 1501, d: 122, o: 0.87 },
  { name: "Chicago", tone: "metro", x: 2380, y: 1388, d: 119, o: 0.87 },
  { name: "San Francisco", tone: "metro", x: 1984, y: 1448, d: 119, o: 0.87 },
  { name: "United Kingdom", tone: "country", x: 3351, y: 1180, d: 114, o: 0.92 },
  { name: "Atlanta", tone: "metro", x: 2416, y: 1504, d: 115, o: 0.87 },
  { name: "Dallas", tone: "metro", x: 2275, y: 1520, d: 114, o: 0.87 },
  { name: "Philadelphia", tone: "metro", x: 2520, y: 1419, d: 114, o: 0.87 },
  { name: "Washington", tone: "metro", x: 2500, y: 1432, d: 113, o: 0.87 },
  { name: "Boston", tone: "metro", x: 2568, y: 1381, d: 113, o: 0.87 },
  { name: "Canada", tone: "country", x: 2296, y: 1057, d: 112, o: 0.87 },
  { name: "Seattle", tone: "metro", x: 1984, y: 1296, d: 112, o: 0.87 },
  { name: "Houston", tone: "metro", x: 2292, y: 1560, d: 112, o: 0.87 },
  { name: "Miami", tone: "metro", x: 2465, y: 1612, d: 110, o: 0.87 },
  { name: "Phoenix", tone: "metro", x: 2099, y: 1507, d: 109, o: 0.87 },
  { name: "Minneapolis", tone: "metro", x: 2316, y: 1340, d: 108, o: 0.87 },
  { name: "Tampa", tone: "metro", x: 2436, y: 1584, d: 108, o: 0.87 },
  { name: "Detroit", tone: "metro", x: 2432, y: 1416, d: 106, o: 0.87 },
  { name: "Australia", tone: "country", x: 4887, y: 2232, d: 109, o: 0.87 },
  { name: "Germany", tone: "country", x: 3481, y: 1237, d: 106, o: 0.85 },
  { name: "India", tone: "country", x: 4252, y: 1681, d: 102, o: 0.8 },
  { name: "Netherlands", tone: "country", x: 3439, y: 1208, d: 99, o: 0.8 },
  { name: "France", tone: "country", x: 3399, y: 1323, d: 97, o: 0.8 },
  { name: "Ireland", tone: "country", x: 3283, y: 1199, d: 96, o: 0.8 },
  { name: "Sweden", tone: "country", x: 3548, y: 1008, d: 94, o: 0.8 },
  { name: "Brazil", tone: "country", x: 2752, y: 2028, d: 94, o: 0.79 },
  { name: "New Zealand", tone: "country", x: 5355, y: 2427, d: 91, o: 0.78 },
  { name: "Japan", tone: "country", x: 4948, y: 1475, d: 90, o: 0.78 },
  { name: "Spain", tone: "muted", x: 3332, y: 1416, d: 87, o: 0.78 },
  { name: "Norway", tone: "muted", x: 3487, y: 1008, d: 86, o: 0.78 },
];

/* The map canvas spans x 1328–5424 and y 636–2476 in its own units. */
const MAP = { x: 1328, y: 636, w: 4096, h: 1840 };

function WorldMap() {
  return (
    <div className="relative overflow-hidden rounded-b-[34px] bg-[#cfdfe4]">
      <svg viewBox="1328 636 4096 1840" className="block aspect-[4096/1840] w-full" role="img" aria-label="World map">
        {TILES.map((tile) => (
          <path key={tile.transform} d={tile.land} transform={tile.transform} fill="#f0f1f3" />
        ))}
        {TILES.map((tile) => (
          <g key={tile.transform} transform={tile.transform}>
            {tile.water && <path d={tile.water} fill="#cfdfe4" />}
            <path
              d={tile.borders}
              fill="none"
              stroke="#dfe0e3"
              strokeWidth="3"
              strokeLinejoin="round"
              vectorEffect="non-scaling-stroke"
            />
          </g>
        ))}
        {LABELS.map((label) => (
          <text
            key={label.lines.join(" ") + label.x}
            y={label.y}
            textAnchor="middle"
            fill="#6e6e76"
            stroke="#f4f5f7"
            strokeWidth="9"
            strokeLinejoin="round"
            paintOrder="stroke"
            className="font-['Noto_Sans',sans-serif] text-[64px] font-bold"
          >
            {label.lines.map((line, i) => (
              <tspan key={line} x={label.x} dy={i === 0 ? 0 : 79}>
                {line}
              </tspan>
            ))}
          </text>
        ))}
      </svg>
      {PINS.map((pin) => (
        <button
          key={pin.name}
          type="button"
          aria-label={pin.name}
          className={TONES[pin.tone]}
          style={{
            left: `${((pin.x - MAP.x) / MAP.w) * 100}%`,
            top: `${((pin.y - MAP.y) / MAP.h) * 100}%`,
            width: `${(pin.d / MAP.w) * 100}%`,
            opacity: pin.o,
          }}
        />
      ))}
    </div>
  );
}

function Tab({ active = false, children }: { active?: boolean; children: ReactNode }) {
  return (
    <button
      type="button"
      aria-pressed={active}
      className={
        active
          ? "flex h-[68px] items-center gap-[11px] rounded-[26px] bg-[#f8f8fa] px-[23px] text-[#11111d] shadow-[0_3px_8px_rgba(0,0,0,0.16)]"
          : "flex h-[68px] items-center gap-3 px-[23px]"
      }
    >
      {children}
    </button>
  );
}

function GeographyCard() {
  return (
    <section className="relative rounded-[34px] bg-[#f3f3f5]">
      <header className="flex h-[227px] items-start justify-between px-[68px] pt-[68px]">
        <div>
          <h2 className="text-[40px] leading-[56px] text-[#5b5b63]">Listener Geography</h2>
          <p className="mt-3 text-[34px] leading-[48px] text-[#8f8f95]">
            Past 30 days · 15 countries · 16 metros
          </p>
        </div>
        <div className="mt-[11px] flex items-center rounded-[34px] bg-[#ececee] p-3 text-[34px] font-medium text-[#62626a]">
          <Tab active>
            <Globe className="size-10" />
            All
          </Tab>
          <Tab>
            <span className="size-[23px] rounded-full bg-[#c98a10]" />
            Country
          </Tab>
          <Tab>
            <span className="size-[23px] rounded-full bg-[#2b92bc]" />
            Metro
          </Tab>
          <Tab>
            <List className="size-10 text-[#c98a10]" />
            Countries
          </Tab>
          <Tab>
            <List className="size-10 text-[#2b92bc]" />
            Metros
          </Tab>
        </div>
      </header>
      <WorldMap />
      <div className="absolute right-3 bottom-[188px] flex h-[117px] items-center gap-[23px] rounded-full border-3 border-[#e9eaed] bg-white px-[51px] text-[40px] font-semibold whitespace-nowrap text-[#11111d] shadow-[0_24px_60px_rgba(30,35,70,0.2)]">
        <MapPin className="size-[43px] text-[#3b6cf0]" />
        Down to the metro
      </div>
    </section>
  );
}

/* ------------------------------------------------------------------ */
/* Donut charts                                                        */
/* ------------------------------------------------------------------ */

type Slice = { share: number; color: string };

/* Ring segment whose corners are rounded by a stroke of the same colour. */
function slicePath(from: number, to: number) {
  const corner = 3;
  const inner = 60 + corner;
  const outer = 90 - corner;
  const side = corner + 1;
  const a = (share: number) => Math.PI + share * 2 * Math.PI;
  const point = (r: number, angle: number) =>
    `${(r * Math.cos(angle)).toFixed(3)} ${(r * Math.sin(angle)).toFixed(3)}`;
  const insetOuter = Math.asin(side / outer);
  const insetInner = Math.asin(side / inner);
  const large = to - from > 0.5 ? 1 : 0;
  return [
    `M${point(outer, a(from) + insetOuter)}`,
    `A${outer} ${outer} 0 ${large} 1 ${point(outer, a(to) - insetOuter)}`,
    `L${point(inner, a(to) - insetInner)}`,
    `A${inner} ${inner} 0 ${large} 0 ${point(inner, a(from) + insetInner)}Z`,
  ].join("");
}

function DonutCard({
  title,
  total,
  unit,
  slices,
  leader,
  leaderShare,
}: {
  title: string;
  total: string;
  unit: string;
  slices: Slice[];
  leader: string;
  leaderShare: string;
}) {
  let start = 0;
  const arcs = slices.map((slice) => {
    const from = start;
    start += slice.share / 100;
    return { color: slice.color, d: slicePath(from, start) };
  });
  return (
    <section className="rounded-t-[34px] bg-[#f3f3f5] px-[68px] pt-[68px] pb-40">
      <h2 className="text-[40px] leading-[56px] text-[#5b5b63]">{title}</h2>
      <div className="mt-[75px] grid place-items-center">
        <svg viewBox="-90 -90 180 180" className="col-start-1 row-start-1 size-[512px]" aria-hidden="true">
          {arcs.map((arc) => (
            <path
              key={arc.color}
              d={arc.d}
              fill={arc.color}
              stroke={arc.color}
              strokeWidth="6"
              strokeLinejoin="round"
            />
          ))}
        </svg>
        <div className="col-start-1 row-start-1 flex flex-col items-center gap-2 pt-[11px]">
          <span className="text-[85px] leading-[100px] font-bold text-[#11111d] tabular-nums">{total}</span>
          <span className="text-[34px] leading-[56px] tracking-widest text-[#62626a]">{unit}</span>
        </div>
      </div>
      <div className="mt-[109px] flex items-center px-[23px] text-[40px] leading-[56px]">
        <span className="size-[34px] rounded-full bg-[#c98a10]" />
        <span className="ml-[46px] flex-1 text-[39px] font-medium text-[#11111d]">{leader}</span>
        <span className="text-[#6b6b73]">{leaderShare}</span>
      </div>
    </section>
  );
}

/* ------------------------------------------------------------------ */
/* Top countries callout                                               */
/* ------------------------------------------------------------------ */

const COUNTRIES = [
  { name: "United States", value: "42,698", share: 58, bar: "h-full rounded-full bg-[#3b6cf0]" },
  { name: "United Kingdom", value: "11,100", share: 24, bar: "h-full rounded-full bg-[#9caddf]" },
  { name: "Canada", value: "7,696", share: 17, bar: "h-full rounded-full bg-[#adbbd8]" },
];

function TopCountries() {
  return (
    <div className="absolute bottom-[206px] left-[183px] w-[840px] rounded-[46px] border-3 border-[#e9eaed] bg-white px-[67px] pt-[65px] pb-16 shadow-[0_50px_110px_rgba(30,50,70,0.17),0_16px_36px_rgba(30,50,70,0.1)]">
      <h2 className="text-[31px] leading-9 font-semibold tracking-widest text-[#9a9a9e]">
        TOP COUNTRIES · 30 DAYS
      </h2>
      <ul className="mt-5 flex flex-col gap-[33px]">
        {COUNTRIES.map((country) => (
          <li key={country.name}>
            <div className="flex justify-between text-[40px] leading-[56px]">
              <span className="text-[39px] font-semibold text-[#11111d]">{country.name}</span>
              <span className="font-medium text-[#55555c] tabular-nums">{country.value}</span>
            </div>
            <div className="mt-[11px] h-[17px] rounded-full bg-[#eeeff1]">
              <div className={country.bar} style={{ width: `${country.share}%` }} />
            </div>
          </li>
        ))}
      </ul>
      <p className="mt-[37px] flex items-center gap-[18px] text-[38px] leading-[56px] whitespace-nowrap text-[#55555c]">
        <Globe className="size-10 shrink-0 text-[#9a9a9e]" />
        Metro-level detail on every episode
      </p>
    </div>
  );
}

/* ------------------------------------------------------------------ */
/* Page                                                                */
/* ------------------------------------------------------------------ */

export default function App() {
  return (
    <div className="relative flex h-screen overflow-hidden bg-[#f0f1f3] font-['Inter',sans-serif]">
      <Sidebar />
      <main className="my-[23px] mr-[23px] min-w-0 flex-1 overflow-hidden rounded-[34px] bg-[#f6f6f8] shadow-[0_3px_9px_rgba(0,0,0,0.12)]">
        <header className="flex h-[182px] items-center pr-[68px] pl-20">
          <button type="button" aria-label="Toggle sidebar" className="flex size-20 items-center justify-center text-[#11111d]">
            <PanelLeft className="size-[46px]" />
          </button>
          <span className="ml-[23px] h-[46px] w-[3px] bg-[#e2e3e6]" />
          <h1 className="ml-11 flex-1 text-[54px] leading-[80px] font-semibold text-[#11111d]">Overview</h1>
          <button
            type="button"
            aria-label="Account"
            className="flex size-[91px] items-center justify-center rounded-full bg-[#eeeef0] text-[#11111d]"
          >
            <User className="size-[46px]" />
          </button>
        </header>
        <div className="mx-auto flex w-full max-w-[2913px] flex-col gap-[136px] pt-5">
          <GeographyCard />
          <div className="grid grid-cols-2 gap-[68px]">
            <DonutCard
              title="Listening Platforms"
              total="12"
              unit="APPS"
              leader="Apple Podcasts"
              leaderShare="37%"
              slices={[
                { share: 37, color: "#c98a10" },
                { share: 29, color: "#2b92bc" },
                { share: 7, color: "#c95363" },
                { share: 5, color: "#795cba" },
                { share: 4, color: "#6ea052" },
                { share: 18, color: "#707176" },
              ]}
            />
            <DonutCard
              title="Devices"
              total="9"
              unit="DEVICES"
              leader="iPhone"
              leaderShare="46%"
              slices={[
                { share: 46, color: "#c98a10" },
                { share: 24, color: "#2b92bc" },
                { share: 9, color: "#c95363" },
                { share: 7, color: "#795cba" },
                { share: 7, color: "#6ea052" },
                { share: 7, color: "#707176" },
              ]}
            />
          </div>
        </div>
      </main>
      <TopCountries />
    </div>
  );
}
